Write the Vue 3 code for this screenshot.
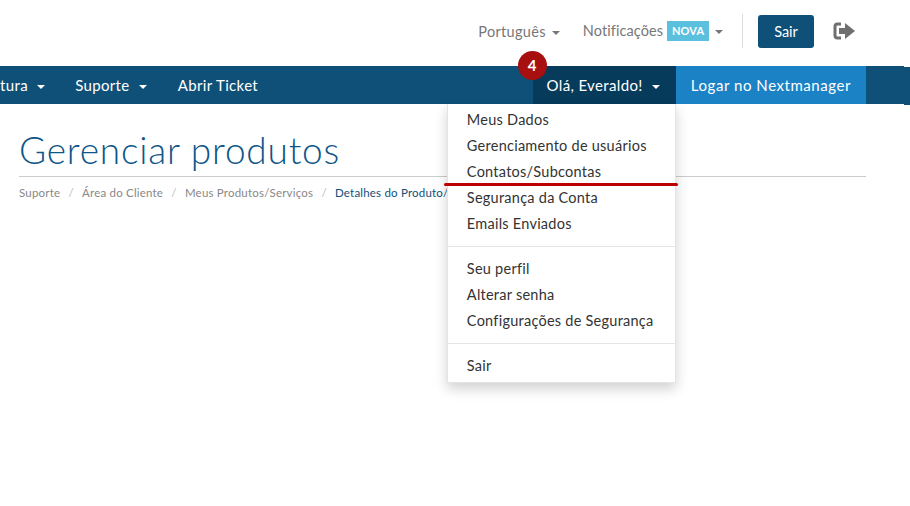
<script setup>
const crumbs = ['Suporte', 'Área do Cliente', 'Meus Produtos/Serviços']
const menuGroups = [
  ['Meus Dados', 'Gerenciamento de usuários', 'Contatos/Subcontas', 'Segurança da Conta', 'Emails Enviados'],
  ['Seu perfil', 'Alterar senha', 'Configurações de Segurança'],
  ['Sair'],
]
</script>

<template>
  <div class="page">
    <header class="topbar">
      <a class="top-link">Português <i class="caret"></i></a>
      <a class="top-link notif">Notificações <span class="label">NOVA</span> <i class="caret"></i></a>
      <div class="sep"></div>
      <button class="logout">Sair</button>
      <svg class="logout-icon" width="22" height="18" viewBox="0 0 22 18">
        <path d="M8 2H4.5A2.5 2.5 0 0 0 2 4.5v9A2.5 2.5 0 0 0 4.500 16H8" fill="none" stroke="#6f6f6f" stroke-width="3" />
        <path d="M6 6h6V1l10 8-10 8v-5H6z" fill="#6f6f6f" />
      </svg>
    </header>

    <nav class="navbar">
      <div class="nav-inner">
        <div class="nav-left">
          <a class="nav-link first">tura <i class="caret light"></i></a>
          <a class="nav-link support">Suporte <i class="caret light"></i></a>
          <a class="nav-link">Abrir Ticket</a>
        </div>
        <div class="nav-right">
          <div class="user">
            <a class="nav-link user-link">Olá, Everaldo! <i class="caret light"></i></a>
            <span class="badge">4</span>
            <div class="dropdown">
              <template v-for="(group, i) in menuGroups" :key="i">
                <div v-if="i > 0" class="divider"></div>
                <a v-for="item in group" :key="item" class="menu-item">{{ item }}</a>
              </template>
            </div>
          </div>
          <a class="nav-link manager">Logar no Nextmanager</a>
        </div>
      </div>
    </nav>

    <main class="content">
      <h1>Gerenciar produtos</h1>
      <div class="breadcrumb">
        <template v-for="c in crumbs" :key="c">
          <span class="crumb">{{ c }}</span>
          <span class="slash">/</span>
        </template>
        <span class="crumb current">Detalhes do Produto/S</span>
      </div>
    </main>
    <div class="marker"></div>
  </div>
</template>

<style>
html, body {
  margin: 0;
  background: #fff;
  overflow: hidden;
}
</style>

<style scoped>
.page {
  position: relative;
  width: 910px;
  height: 506px;
  overflow: hidden;
  font-family: Lato, "Noto Sans", sans-serif;
  background: #fff;
}

.topbar {
  display: flex;
  align-items: center;
  justify-content: flex-end;
  height: 66px;
  padding-right: 55px;
  box-sizing: border-box;
  padding-bottom: 4px;
}

.top-link {
  color: #777;
  font-size: 14.5px;
  letter-spacing: 0.3px;
  margin-right: 23px;
  white-space: nowrap;
}

.notif {
  letter-spacing: 0.1px;
  margin-right: 19px;
}

.label {
  display: inline-block;
  background: #5bc0de;
  color: #fff;
  font-size: 11px;
  font-weight: 700;
  line-height: 20px;
  padding: 0 5px;
  vertical-align: 1px;
}

.caret {
  display: inline-block;
  width: 0;
  height: 0;
  margin-left: 2px;
  vertical-align: middle;
  border-top: 4px solid #777;
  border-left: 4px solid transparent;
  border-right: 4px solid transparent;
}

.caret.light {
  border-top-color: #fff;
  margin-left: 5px;
}

.sep {
  width: 1px;
  height: 34px;
  background: #ddd;
  margin-right: 15px;
}

.logout {
  width: 56px;
  height: 33px;
  margin-top: 1px;
  border: 0;
  border-radius: 3px;
  background: #0f5078;
  color: #fff;
  font-family: inherit;
  font-size: 14.5px;
  padding: 0;
  margin-right: 19px;
}

.logout-icon {
  display: block;
}

.navbar {
  position: relative;
  width: 904px;
  height: 38px;
  background: #0f5078;
}

/* the bar's last few pixels sit one pixel lower in the reference */
.navbar::after {
  content: "";
  position: absolute;
  top: 1px;
  left: 904px;
  width: 6px;
  height: 38px;
  background: #0f5078;
}

.nav-inner {
  display: flex;
  justify-content: space-between;
  width: 866px;
  height: 38px;
}

.nav-left, .nav-right {
  display: flex;
}

.nav-link {
  color: #fff;
  font-size: 15px;
  letter-spacing: 0.35px;
  line-height: 38px;
  padding: 0 15px;
  white-space: nowrap;
}

.nav-link.first {
  padding-left: 0;
}

.nav-link.support {
  padding-right: 16px;
}

.user {
  position: relative;
  background: #073b5c;
}

.user-link {
  display: block;
  padding: 0 16px 0 14px;
}

.manager {
  background: #1b82c5;
  padding: 0 15px;
  letter-spacing: 0.55px;
}

.badge {
  position: absolute;
  top: -15px;
  left: -15px;
  width: 29px;
  height: 29px;
  border-radius: 50%;
  background: #a80f0f;
  color: #fff;
  font-size: 15px;
  font-weight: 700;
  line-height: 29px;
  text-align: center;
}

.dropdown {
  position: absolute;
  top: 38px;
  right: 0;
  width: 229px;
  padding: 3px 0;
  box-sizing: border-box;
  background: #fff;
  border: 1px solid #e4e4e4;
  border-top: 0;
  box-shadow: 0 6px 12px rgba(0, 0, 0, 0.18);
  z-index: 2;
}

.menu-item {
  display: block;
  padding: 0 19px;
  color: #333;
  font-size: 14.5px;
  letter-spacing: 0.25px;
  line-height: 26px;
  white-space: nowrap;
}

.divider {
  height: 1px;
  background: #e5e5e5;
  margin: 9px 0;
}

.content {
  width: 847px;
  margin-left: 19px;
}

h1 {
  margin: 0;
  padding-top: 25px;
  height: 47px;
  color: #0e5688;
  font-size: 37px;
  font-weight: 300;
  line-height: 41px;
  letter-spacing: 0.8px;
  border-bottom: 1px solid #ccc;
}

.breadcrumb {
  font-size: 11.5px;
  letter-spacing: 0.2px;
  line-height: 16px;
  margin-top: 8px;
  white-space: nowrap;
}

.crumb {
  color: #888;
}

.crumb.current {
  color: #0f5078;
}

.slash {
  color: #bbb;
  padding: 0 8.2px;
}

.marker {
  position: absolute;
  left: 444px;
  top: 183px;
  width: 234px;
  height: 3px;
  border-radius: 2px;
  background: #b00;
  z-index: 3;
}
</style>
